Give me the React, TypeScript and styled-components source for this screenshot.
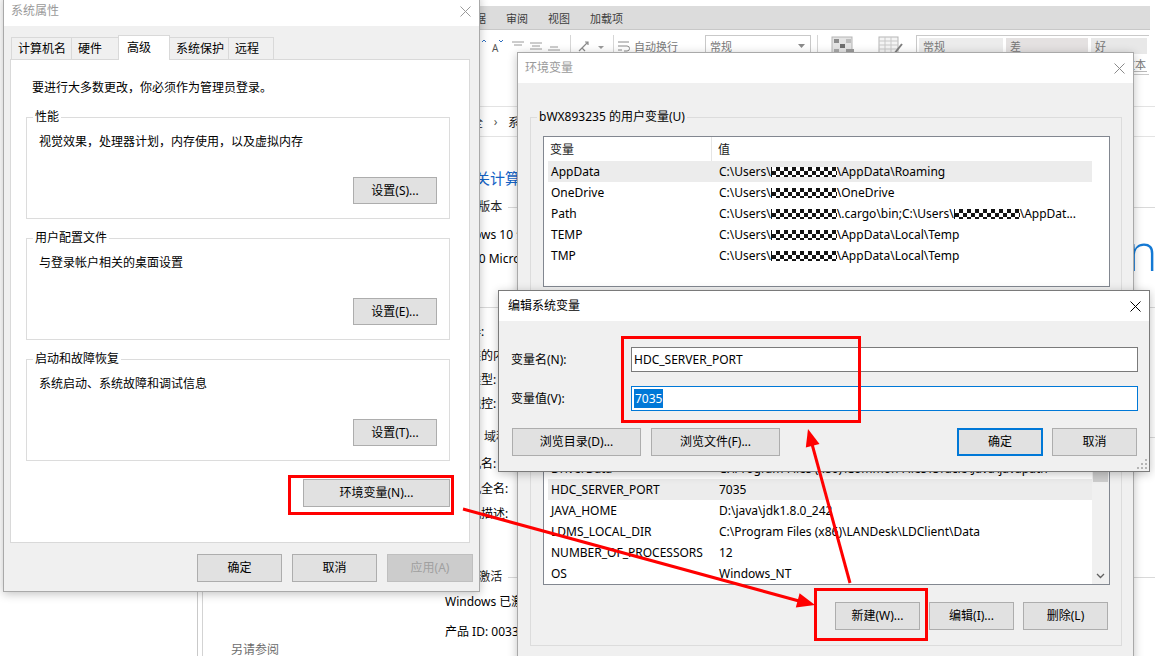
import React, { FC } from "react";
import styled, { createGlobalStyle } from "styled-components";

type EnvVar = { name: string; value: React.ReactNode; hover?: boolean };

const GlobalStyle = createGlobalStyle`
  * { box-sizing: border-box; }
  html, body { margin: 0; padding: 0; background: #ffffff; }
  body {
    font-family: "Noto Sans", "Noto Sans CJK SC", sans-serif;
    font-size: 12px;
    color: #000;
    overflow: hidden;
  }
`;

const Desktop = styled.div`
  position: relative;
  width: 1155px;
  height: 656px;
  overflow: hidden;
  background: #ffffff;
`;

/* ---------- window chrome ---------- */

const Window = styled.div<{ $x: number; $y: number; $w: number; $h: number; $active?: boolean }>`
  position: absolute;
  left: ${(p) => p.$x}px;
  top: ${(p) => p.$y}px;
  width: ${(p) => p.$w}px;
  height: ${(p) => p.$h}px;
  display: flex;
  flex-direction: column;
  background: #f0f0f0;
  border: 1px solid ${(p) => (p.$active ? "#7a7a7a" : "#a9a9a9")};
  box-shadow: 0 2px 9px rgba(0, 0, 0, 0.24);
`;

const TitleBar = styled.div<{ $pad?: number }>`
  display: flex;
  align-items: center;
  flex-shrink: 0;
  height: 30px;
  padding-left: ${(p) => p.$pad ?? 7}px;
  background: #ffffff;
`;

const Title = styled.span<{ $active?: boolean }>`
  line-height: 16px;
  color: ${(p) => (p.$active ? "#000000" : "#9a9a9a")};
`;

const CloseBox = styled.div`
  margin-left: auto;
  width: 28px;
  height: 30px;
  display: flex;
  align-items: center;
  justify-content: center;
`;

const CloseIcon: FC<{ color: string }> = ({ color }) => (
  <svg width="11" height="11" viewBox="0 0 11 11">
    <path d="M0.5 0.5 L10.5 10.5 M10.5 0.5 L0.5 10.5" stroke={color} strokeWidth="1" fill="none" />
  </svg>
);

const Button = styled.button<{ $w: number; $h?: number; $default?: boolean; $disabled?: boolean }>`
  width: ${(p) => p.$w}px;
  height: ${(p) => p.$h ?? 27}px;
  padding: 0;
  display: flex;
  align-items: center;
  justify-content: center;
  font: inherit;
  line-height: 16px;
  white-space: nowrap;
  cursor: default;
  background: ${(p) => (p.$disabled ? "#cccccc" : "#e1e1e1")};
  color: ${(p) => (p.$disabled ? "#a0a0a0" : "#000000")};
  border: ${(p) =>
    p.$default ? "2px solid #0078d7" : `1px solid ${p.$disabled ? "#bfbfbf" : "#adadad"}`};
`;

const ButtonRow = styled.div<{ $top?: number; $gap?: number; $right?: number }>`
  display: flex;
  justify-content: flex-end;
  gap: ${(p) => p.$gap ?? 10}px;
  margin-top: ${(p) => p.$top ?? 0}px;
  margin-right: ${(p) => p.$right ?? 0}px;
`;

const Group = styled.fieldset<{ $gap?: number }>`
  margin: ${(p) => p.$gap ?? 0}px 0 0 0;
  padding: 0;
  min-width: 0;
  border: 1px solid #dcdcdc;
`;

const Legend = styled.legend`
  margin-left: 6px;
  padding: 0 2px;
  line-height: 16px;
`;

/* ---------- system properties ---------- */

const SysBody = styled.div`
  display: flex;
  flex-direction: column;
  padding: 9px 6px 0 6px;
`;

const TabStrip = styled.div`
  display: flex;
  align-items: flex-end;
  height: 24px;
  margin-left: 1px;
`;

const Tab = styled.div<{ $w: number; $active?: boolean }>`
  position: relative;
  z-index: ${(p) => (p.$active ? 2 : 1)};
  width: ${(p) => p.$w}px;
  height: ${(p) => (p.$active ? 25 : 22)}px;
  margin-bottom: ${(p) => (p.$active ? -1 : 0)}px;
  padding-left: ${(p) => (p.$active ? 8 : 6)}px;
  display: flex;
  align-items: center;
  line-height: 16px;
  background: ${(p) => (p.$active ? "#ffffff" : "#f0f0f0")};
  border: 1px solid #d9d9d9;
  border-bottom: none;
  & + & {
    margin-left: -1px;
  }
`;

const TabPanel = styled.div`
  height: 484px;
  margin-right: 3px;
  display: flex;
  flex-direction: column;
  padding: 20px 19px 0 15px;
  background: #ffffff;
  border: 1px solid #d9d9d9;
`;

const Intro = styled.div`
  margin-left: 6px;
  line-height: 16px;
`;

const GroupBody = styled.div`
  padding: 9px 12px 14px 12px;
`;

const Desc = styled.div`
  line-height: 16px;
`;

/* ---------- environment variables ---------- */

const EnvBody = styled.div`
  display: flex;
  flex-direction: column;
  padding: 26px 11px 0 12px;
`;

const EnvGroupBody = styled.div<{ $bottom?: number }>`
  padding: 11px 11px ${(p) => p.$bottom ?? 12}px 12px;
`;

const ListBox = styled.div<{ $h: number }>`
  height: ${(p) => p.$h}px;
  display: flex;
  background: #ffffff;
  border: 1px solid #828790;
  overflow: hidden;
`;

const ListMain = styled.div<{ $spare?: number }>`
  flex: 1;
  display: flex;
  flex-direction: column;
  padding-left: 4px;
  padding-right: ${(p) => p.$spare ?? 0}px;
  overflow: hidden;
`;

const ListHeader = styled.div`
  display: flex;
  flex-shrink: 0;
  height: 24px;
  color: #1a1a1a;
`;

const HeadCell = styled.div<{ $first?: boolean }>`
  display: flex;
  align-items: center;
  width: ${(p) => (p.$first ? "164px" : "auto")};
  flex: ${(p) => (p.$first ? "none" : 1)};
  padding-left: ${(p) => (p.$first ? 2 : 6)}px;
  border-right: ${(p) => (p.$first ? "1px solid #e5e5e5" : "none")};
`;

const Row = styled.div<{ $hover?: boolean }>`
  display: flex;
  align-items: center;
  flex-shrink: 0;
  height: 21px;
  background: ${(p) => (p.$hover ? "#ececec" : "transparent")};
  white-space: nowrap;
`;

const NameCell = styled.div`
  width: 164px;
  padding-left: 3px;
  overflow: hidden;
  flex-shrink: 0;
`;

const ValueCell = styled.div`
  flex: 1;
  padding-left: 7px;
  overflow: hidden;
`;

const Redact = styled.span<{ $w?: number }>`
  display: inline-block;
  width: ${(p) => p.$w ?? 66}px;
  height: 10px;
  vertical-align: -1px;
  border-left: 1px solid #111;
  background-color: #ffffff;
  background-image: repeating-conic-gradient(#141414 0% 25%, #ffffff 0% 50%);
  background-size: 8px 8px;
`;

const ScrollBar = styled.div`
  width: 17px;
  flex-shrink: 0;
  display: flex;
  flex-direction: column;
  background: #f0f0f0;
`;

const ScrollArrow = styled.div`
  height: 17px;
  display: flex;
  align-items: center;
  justify-content: center;
`;

const ScrollTrack = styled.div`
  flex: 1;
`;

const Thumb = styled.div`
  height: 88px;
  margin: 6px 1px 0 1px;
  background: #cdcdcd;
`;

/* ---------- edit variable ---------- */

const EditBody = styled.div`
  display: flex;
  flex-direction: column;
  padding: 26px 11px 0 12px;
`;

const FieldRow = styled.div<{ $top?: number }>`
  display: flex;
  align-items: center;
  margin-top: ${(p) => p.$top ?? 0}px;
`;

const FieldLabel = styled.div`
  width: 120px;
  line-height: 16px;
`;

const TextBox = styled.div<{ $focused?: boolean }>`
  flex: 1;
  height: 25px;
  display: flex;
  align-items: center;
  padding-left: 2px;
  background: #ffffff;
  border: 1px solid ${(p) => (p.$focused ? "#0078d7" : "#7a7a7a")};
`;

const Selected = styled.span`
  padding: 0 1px;
  line-height: 19px;
  background: #0078d7;
  color: #ffffff;
`;

const DialogActions = styled.div`
  display: flex;
  gap: 10px;
  margin: 17px 1px 0 1px;
`;

const RightActions = styled.div`
  display: flex;
  gap: 9px;
  margin-left: auto;
`;

const Grip = styled.svg`
  position: absolute;
  right: 2px;
  bottom: 2px;
`;

/* ---------- excel ribbon (background) ---------- */

const ExcelWindow = styled.div`
  position: absolute;
  left: 440px;
  top: 0;
  width: 710px;
  height: 110px;
  padding-top: 6px;
  background: #ffffff;
`;

const RibbonTabs = styled.div`
  display: flex;
  align-items: center;
  height: 24px;
  padding-left: 14px;
  background: #dcdcdc;
  border-bottom: 1px solid #c8c8c8;
`;

const RibbonTab = styled.span`
  padding: 0 10px;
  font-size: 11px;
  color: #3c3c3c;
`;

const RibbonBar = styled.div`
  display: flex;
  align-items: flex-start;
  padding: 5px 0 0 40px;
  color: #7a7a7a;
  font-size: 11px;
`;

const RibbonItem = styled.div<{ $gap?: number; $w?: number }>`
  display: flex;
  align-items: center;
  gap: 3px;
  margin-left: ${(p) => p.$gap ?? 0}px;
  width: ${(p) => (p.$w ? `${p.$w}px` : "auto")};
  height: 22px;
  flex-shrink: 0;
`;

const RibbonSep = styled.div<{ $gap: number }>`
  width: 1px;
  height: 38px;
  margin-left: ${(p) => p.$gap}px;
  background: #d6d6d6;
  flex-shrink: 0;
`;

const NumberBox = styled.div`
  display: flex;
  align-items: center;
  justify-content: space-between;
  width: 106px;
  height: 21px;
  margin-left: 27px;
  padding: 0 5px 0 4px;
  border: 1px solid #c9c9c9;
  color: #777;
  flex-shrink: 0;
`;

const Gallery = styled.div`
  display: grid;
  grid-template-columns: 84px 82px 1fr;
  grid-auto-rows: 16px;
  column-gap: 3px;
  row-gap: 2px;
  width: 233px;
  margin-left: 12px;
  padding: 2px;
  border: 1px solid #c9c9c9;
  border-right: none;
  flex-shrink: 0;
`;

const StyleCell = styled.div<{ $bg: string; $line?: boolean; $pad?: number }>`
  display: flex;
  align-items: center;
  padding-left: ${(p) => p.$pad ?? 4}px;
  background: ${(p) => p.$bg};
  border-bottom: ${(p) => (p.$line ? "1px solid #b9b9b9" : "none")};
  color: #777;
  white-space: nowrap;
  overflow: hidden;
`;

/* ---------- control panel (background) ---------- */

const PanelWindow = styled.div`
  position: absolute;
  left: 197px;
  top: 76px;
  width: 1000px;
  height: 640px;
  display: flex;
  flex-direction: column;
  background: #ffffff;
  border-left: 1px solid #c9c9c9;
`;

const PanelTitle = styled.div`
  height: 31px;
  flex-shrink: 0;
  border-bottom: 1px solid #e3e3e3;
`;

const AddressBar = styled.div`
  display: flex;
  align-items: center;
  height: 30px;
  flex-shrink: 0;
  padding-left: 111px;
  border-bottom: 1px solid #e3e3e3;
  color: #1a1a1a;
`;

const Crumb = styled.span`
  white-space: nowrap;
`;

const Chevron = styled.span`
  width: 25px;
  text-align: center;
  color: #555;
`;

const PanelBody = styled.div`
  flex: 1;
  display: flex;
  min-height: 0;
`;

const Sidebar = styled.div`
  width: 222px;
  flex-shrink: 0;
  margin-left: 4px;
  display: flex;
  flex-direction: column;
  padding: 18px 0 0 28px;
  border-left: 1px solid #d3d3d3;
`;

const SideLink = styled.span<{ $muted?: boolean; $top?: number }>`
  margin-top: ${(p) => p.$top ?? 10}px;
  line-height: 16px;
  white-space: nowrap;
  color: ${(p) => (p.$muted ? "#6d6d6d" : "#1a5fb4")};
  &:first-child {
    margin-top: 0;
  }
`;

const PanelMain = styled.div`
  flex: 1;
  min-width: 0;
  display: flex;
  flex-direction: column;
  overflow: hidden;
`;

const PanelHeading = styled.div`
  margin: 30px 0 0 6px;
  font-size: 15px;
  line-height: 22px;
  color: #1464c6;
  white-space: nowrap;
`;

const SectionHead = styled.div<{ $top: number }>`
  display: flex;
  align-items: center;
  margin-top: ${(p) => p.$top}px;
  line-height: 16px;
  color: #1e1e1e;
  white-space: nowrap;
  &::after {
    content: "";
    flex: 1;
    height: 1px;
    margin-left: 6px;
    background: #d9d9d9;
  }
`;

const VersionRow = styled.div`
  display: flex;
  height: 52px;
  margin-top: 12px;
  padding-left: 21px;
`;

const VersionText = styled.div`
  width: 627px;
  flex-shrink: 0;
  display: flex;
  flex-direction: column;
  gap: 8px;
  line-height: 16px;
  white-space: nowrap;
`;

const Logo = styled.div`
  font-family: "Open Sans", "Noto Sans", sans-serif;
  font-weight: 300;
  font-size: 50px;
  line-height: 50px;
  color: #1479d4;
  white-space: nowrap;
`;

const InfoGrid = styled.div<{ $top: number; $gap: number }>`
  display: grid;
  grid-template-columns: 135px 1fr;
  row-gap: ${(p) => p.$gap}px;
  margin-top: ${(p) => p.$top}px;
  padding-left: 21px;
  line-height: 16px;
  white-space: nowrap;
`;

const InfoLine = styled.div<{ $top: number }>`
  margin-top: ${(p) => p.$top}px;
  padding-left: 21px;
  line-height: 16px;
  white-space: nowrap;
`;

/* ---------- annotations ---------- */

const Callout = styled.div<{ $x: number; $y: number; $w: number; $h: number }>`
  position: absolute;
  left: ${(p) => p.$x}px;
  top: ${(p) => p.$y}px;
  width: ${(p) => p.$w}px;
  height: ${(p) => p.$h}px;
  border: 3px solid #ff0000;
  pointer-events: none;
`;

const Arrows = styled.svg`
  position: absolute;
  left: 0;
  top: 0;
  pointer-events: none;
`;

/* ---------- data ---------- */

const sysTabs = [
  { label: "计算机名", w: 61 },
  { label: "硬件", w: 48 },
  { label: "高级", w: 52, active: true },
  { label: "系统保护", w: 60 },
  { label: "远程", w: 46 },
];

const sysGroups = [
  { title: "性能", desc: "视觉效果，处理器计划，内存使用，以及虚拟内存", button: "设置(S)..." },
  { title: "用户配置文件", desc: "与登录帐户相关的桌面设置", button: "设置(E)..." },
  { title: "启动和故障恢复", desc: "系统启动、系统故障和调试信息", button: "设置(T)..." },
];

const userVars: EnvVar[] = [
  { name: "AppData", value: <>C:\Users\<Redact />\AppData\Roaming</>, hover: true },
  { name: "OneDrive", value: <>C:\Users\<Redact />\OneDrive</> },
  {
    name: "Path",
    value: (
      <>
        C:\Users\<Redact />\.cargo\bin;C:\Users\<Redact />\AppDat...
      </>
    ),
  },
  { name: "TEMP", value: <>C:\Users\<Redact />\AppData\Local\Temp</> },
  { name: "TMP", value: <>C:\Users\<Redact />\AppData\Local\Temp</> },
];

const systemVars: EnvVar[] = [
  { name: "ComSpec", value: "C:\\Windows\\system32\\cmd.exe" },
  { name: "FPS_BROWSER_APP_PROFILE_STRING", value: "Internet Explorer" },
  { name: "FPS_BROWSER_USER_PROFILE_STRING", value: "Default" },
  { name: "DriverData", value: "C:\\Program Files (x86)\\Common Files\\Oracle\\Java\\javapath" },
  { name: "HDC_SERVER_PORT", value: "7035", hover: true },
  { name: "JAVA_HOME", value: "D:\\java\\jdk1.8.0_242" },
  { name: "LDMS_LOCAL_DIR", value: "C:\\Program Files (x86)\\LANDesk\\LDClient\\Data" },
  { name: "NUMBER_OF_PROCESSORS", value: "12" },
  { name: "OS", value: "Windows_NT" },
];

const systemInfo = [
  ["处理器:", "Intel(R) Core(TM) i7-10700 CPU @ 2.90GHz"],
  ["已安装的内存(RAM):", "32.0 GB"],
  ["系统类型:", "64 位操作系统，基于 x64 的处理器"],
  ["笔和触控:", "没有可用于此显示器的笔或触控输入"],
];

const nameInfo = [
  ["计算机名:", "bWX893235"],
  ["计算机全名:", "bWX893235"],
  ["计算机描述:", ""],
];

/* ---------- small drawings ---------- */

const Caret: FC<{ color?: string }> = ({ color = "#8a8a8a" }) => (
  <svg width="7" height="4" viewBox="0 0 7 4">
    <path d="M0 0 L7 0 L3.5 4 Z" fill={color} />
  </svg>
);

const ChevronDown = () => (
  <svg width="9" height="6" viewBox="0 0 9 6">
    <path d="M1 1 L4.5 4.5 L8 1" stroke="#606060" strokeWidth="1.3" fill="none" />
  </svg>
);

const ChevronUp = () => (
  <svg width="9" height="6" viewBox="0 0 9 6">
    <path d="M1 5 L4.5 1.5 L8 5" stroke="#606060" strokeWidth="1.3" fill="none" />
  </svg>
);

const VarList: FC<{ vars: EnvVar[]; height: number; scroll?: boolean }> = ({ vars, height, scroll }) => (
  <ListBox $h={height}>
    <ListMain $spare={scroll ? 0 : 17}>
      <ListHeader>
        <HeadCell $first>变量</HeadCell>
        <HeadCell>值</HeadCell>
      </ListHeader>
      {vars.map((v) => (
        <Row key={v.name} $hover={v.hover}>
          <NameCell>{v.name}</NameCell>
          <ValueCell>{v.value}</ValueCell>
        </Row>
      ))}
    </ListMain>
    {scroll && (
      <ScrollBar>
        <ScrollArrow>
          <ChevronUp />
        </ScrollArrow>
        <ScrollTrack>
          <Thumb />
        </ScrollTrack>
        <ScrollArrow>
          <ChevronDown />
        </ScrollArrow>
      </ScrollBar>
    )}
  </ListBox>
);

/* ---------- windows ---------- */

const ExcelRibbon = () => (
  <ExcelWindow>
    <RibbonTabs>
      <RibbonTab>数据</RibbonTab>
      <RibbonTab>审阅</RibbonTab>
      <RibbonTab>视图</RibbonTab>
      <RibbonTab>加载项</RibbonTab>
    </RibbonTabs>
    <RibbonBar>
      <RibbonItem $w={28}>
        <svg width="24" height="14" viewBox="0 0 24 14">
          <path d="M2 3 L4 1 L6 3" stroke="#2f6fbf" strokeWidth="1" fill="none" />
          <text x="12" y="13" fontSize="10" fill="#555" fontFamily="Noto Sans, sans-serif">A</text>
          <path d="M19 1 L21 3 L23 1" stroke="#2f6fbf" strokeWidth="1" fill="none" />
        </svg>
      </RibbonItem>
      <RibbonItem $gap={4} $w={52}>
        <svg width="52" height="14" viewBox="0 0 52 14">
          <path
            d="M0 3h12 M2 6h8 M18 4h12 M20 7h8 M18 10h12 M38 8h8 M36 11h12"
            stroke="#9a9a9a"
            strokeWidth="1"
          />
        </svg>
      </RibbonItem>
      <RibbonSep $gap={6} />
      <RibbonItem $gap={6} $w={30}>
        <svg width="30" height="16" viewBox="0 0 30 16">
          <path d="M2 13 L11 4 M8 4 L11 4 L11 7 M5 10 L8 13" stroke="#8a8a8a" strokeWidth="1.2" fill="none" />
          <path d="M21 8 L27 8 L24 11 Z" fill="#9a9a9a" />
        </svg>
      </RibbonItem>
      <RibbonSep $gap={6} />
      <RibbonItem $gap={4}>
        <svg width="13" height="13" viewBox="0 0 13 13">
          <path d="M0 2h11 M0 6h9 a2.5 2.5 0 0 1 0 5 h-3 M0 10h4" stroke="#8a8a8a" strokeWidth="1" fill="none" />
        </svg>
        <span>自动换行</span>
      </RibbonItem>
      <NumberBox>
        <span>常规</span>
        <Caret />
      </NumberBox>
      <RibbonSep $gap={6} />
      <RibbonItem $gap={13}>
        <svg width="26" height="20" viewBox="0 0 26 20">
          <rect x="1" y="1" width="20" height="17" fill="#e4e4e4" stroke="#b5b5b5" />
          <rect x="3" y="3" width="5" height="4" fill="#8c8c8c" />
          <rect x="9" y="8" width="5" height="4" fill="#6f6f6f" />
          <rect x="3" y="13" width="5" height="4" fill="#a9a9a9" />
          <rect x="15" y="3" width="5" height="4" fill="#bdbdbd" />
          <rect x="15" y="13" width="8" height="6" fill="#9b9b9b" />
        </svg>
      </RibbonItem>
      <RibbonItem $gap={21}>
        <svg width="26" height="20" viewBox="0 0 26 20">
          <rect x="1" y="1" width="19" height="16" fill="#f4f4f4" stroke="#b5b5b5" />
          <path d="M1 5h19 M1 9h19 M1 13h19 M7 1v16 M13 1v16" stroke="#c8c8c8" />
          <path d="M16 18 L24 8" stroke="#7d7d7d" strokeWidth="2" />
        </svg>
      </RibbonItem>
      <Gallery>
        <StyleCell $bg="#ececec">常规</StyleCell>
        <StyleCell $bg="#e4e1e1">差</StyleCell>
        <StyleCell $bg="#e8e8e8">好</StyleCell>
        <StyleCell $bg="#eeeeee">适中</StyleCell>
        <StyleCell $bg="#eeeeee">计算</StyleCell>
        <StyleCell $bg="#ffffff" $line $pad={0}>
          解释性文本
        </StyleCell>
      </Gallery>
    </RibbonBar>
  </ExcelWindow>
);

const ControlPanel = () => (
  <PanelWindow>
    <PanelTitle />
    <AddressBar>
      <svg width="16" height="14" viewBox="0 0 16 14">
        <rect x="1" y="1" width="14" height="9" fill="#cfe3f7" stroke="#4a87c8" />
        <path d="M5 13h6" stroke="#777" />
      </svg>
      <Chevron>›</Chevron>
      <Crumb>控制面板</Crumb>
      <Chevron>›</Chevron>
      <Crumb>系统和安全</Crumb>
      <Chevron>›</Chevron>
      <Crumb>系统</Crumb>
    </AddressBar>
    <PanelBody>
      <Sidebar>
        <SideLink>控制面板主页</SideLink>
        <SideLink>设备管理器</SideLink>
        <SideLink>远程设置</SideLink>
        <SideLink>系统保护</SideLink>
        <SideLink>高级系统设置</SideLink>
        <SideLink $muted $top={367}>
          另请参阅
        </SideLink>
        <SideLink>安全和维护</SideLink>
      </Sidebar>
      <PanelMain>
        <PanelHeading>查看有关计算机的基本信息</PanelHeading>
        <SectionHead $top={10}>Windows 版本</SectionHead>
        <VersionRow>
          <VersionText>
            <span>Windows 10 企业版</span>
            <span>© 2020 Microsoft Corporation。保留所有权利。</span>
          </VersionText>
          <Logo>Windows10</Logo>
        </VersionRow>
        <SectionHead $top={20}>系统</SectionHead>
        <InfoGrid $top={9} $gap={8}>
          {systemInfo.map(([k, v]) => (
            <React.Fragment key={k}>
              <span>{k}</span>
              <span>{v}</span>
            </React.Fragment>
          ))}
        </InfoGrid>
        <SectionHead $top={17}>计算机名、域和工作组设置</SectionHead>
        <InfoGrid $top={11} $gap={9}>
          {nameInfo.map(([k, v]) => (
            <React.Fragment key={k}>
              <span>{k}</span>
              <span>{v}</span>
            </React.Fragment>
          ))}
        </InfoGrid>
        <SectionHead $top={47}>Windows 激活</SectionHead>
        <InfoLine $top={9}>Windows 已激活  阅读 Microsoft 软件许可条款</InfoLine>
        <InfoLine $top={14}>产品 ID: 00331-10000-00001-AA428</InfoLine>
      </PanelMain>
    </PanelBody>
  </PanelWindow>
);

const SystemProperties = () => (
  <Window $x={3} $y={-5} $w={477} $h={597}>
    <TitleBar>
      <Title>系统属性</Title>
      <CloseBox>
        <CloseIcon color="#9a9a9a" />
      </CloseBox>
    </TitleBar>
    <SysBody>
      <TabStrip>
        {sysTabs.map((t) => (
          <Tab key={t.label} $w={t.w} $active={t.active}>
            {t.label}
          </Tab>
        ))}
      </TabStrip>
      <TabPanel>
        <Intro>要进行大多数更改，你必须作为管理员登录。</Intro>
        {sysGroups.map((g, i) => (
          <Group key={g.title} $gap={i === 0 ? 13 : 11}>
            <Legend>{g.title}</Legend>
            <GroupBody>
              <Desc>{g.desc}</Desc>
              <ButtonRow $top={27}>
                <Button $w={84}>{g.button}</Button>
              </ButtonRow>
            </GroupBody>
          </Group>
        ))}
        <ButtonRow $top={18}>
          <Button $w={147} $h={28}>
            环境变量(N)...
          </Button>
        </ButtonRow>
      </TabPanel>
      <ButtonRow $top={11}>
        <Button $w={85} $h={28}>确定</Button>
        <Button $w={85} $h={28}>取消</Button>
        <Button $w={86} $h={28} $disabled>
          应用(A)
        </Button>
      </ButtonRow>
    </SysBody>
  </Window>
);

const EnvironmentVariables = () => (
  <Window $x={517} $y={52} $w={617} $h={660}>
    <TitleBar>
      <Title>环境变量</Title>
      <CloseBox>
        <CloseIcon color="#8a8a8a" />
      </CloseBox>
    </TitleBar>
    <EnvBody>
      <Group>
        <Legend>bWX893235 的用户变量(U)</Legend>
        <EnvGroupBody>
          <VarList vars={userVars} height={151} />
          <ButtonRow $top={9} $right={2}>
            <Button $w={85}>新建(N)...</Button>
            <Button $w={85}>编辑(E)...</Button>
            <Button $w={85}>删除(D)</Button>
          </ButtonRow>
        </EnvGroupBody>
      </Group>
      <Group $gap={7}>
        <Legend>系统变量(S)</Legend>
        <EnvGroupBody $bottom={15}>
          <VarList vars={systemVars} height={215} scroll />
          <ButtonRow $top={17} $right={2} $gap={9}>
            <Button $w={85} $h={28}>新建(W)...</Button>
            <Button $w={85} $h={28}>编辑(I)...</Button>
            <Button $w={85} $h={28}>删除(L)</Button>
          </ButtonRow>
        </EnvGroupBody>
      </Group>
      <ButtonRow $top={12}>
        <Button $w={85} $h={28}>确定</Button>
        <Button $w={85} $h={28}>取消</Button>
      </ButtonRow>
    </EnvBody>
  </Window>
);

const EditVariable = () => (
  <Window $x={498} $y={290} $w={652} $h={182} $active>
    <TitleBar $pad={9}>
      <Title $active>编辑系统变量</Title>
      <CloseBox>
        <CloseIcon color="#000000" />
      </CloseBox>
    </TitleBar>
    <EditBody>
      <FieldRow>
        <FieldLabel>变量名(N):</FieldLabel>
        <TextBox>HDC_SERVER_PORT</TextBox>
      </FieldRow>
      <FieldRow $top={14}>
        <FieldLabel>变量值(V):</FieldLabel>
        <TextBox $focused>
          <Selected>7035</Selected>
        </TextBox>
      </FieldRow>
      <DialogActions>
        <Button $w={129} $h={28}>浏览目录(D)...</Button>
        <Button $w={129} $h={28}>浏览文件(F)...</Button>
        <RightActions>
          <Button $w={86} $h={28} $default>
            确定
          </Button>
          <Button $w={85} $h={28}>取消</Button>
        </RightActions>
      </DialogActions>
    </EditBody>
    <Grip width="10" height="10" viewBox="0 0 10 10">
      <g fill="#b5b5b5">
        <rect x="8" y="0" width="2" height="2" />
        <rect x="4" y="4" width="2" height="2" />
        <rect x="8" y="4" width="2" height="2" />
        <rect x="0" y="8" width="2" height="2" />
        <rect x="4" y="8" width="2" height="2" />
        <rect x="8" y="8" width="2" height="2" />
      </g>
    </Grip>
  </Window>
);

const App: FC = () => (
  <>
    <GlobalStyle />
    <Desktop>
      <ExcelRibbon />
      <ControlPanel />
      <SystemProperties />
      <EnvironmentVariables />
      <EditVariable />

      <Callout $x={288} $y={475} $w={166} $h={40} />
      <Callout $x={621} $y={336} $w={240} $h={87} />
      <Callout $x={814} $y={588} $w={114} $h={53} />

      <Arrows width="1155" height="656" viewBox="0 0 1155 656">
        <line x1="463" y1="509" x2="799" y2="601" stroke="#ff0000" strokeWidth="3" />
        <polygon points="815,605 795.8,607.6 799.6,593.2" fill="#ff0000" />
        <line x1="850" y1="583" x2="812" y2="444" stroke="#ff0000" strokeWidth="3" />
        <polygon points="808,429 819.5,444 805.8,447.6" fill="#ff0000" />
      </Arrows>
    </Desktop>
  </>
);

export default App;
